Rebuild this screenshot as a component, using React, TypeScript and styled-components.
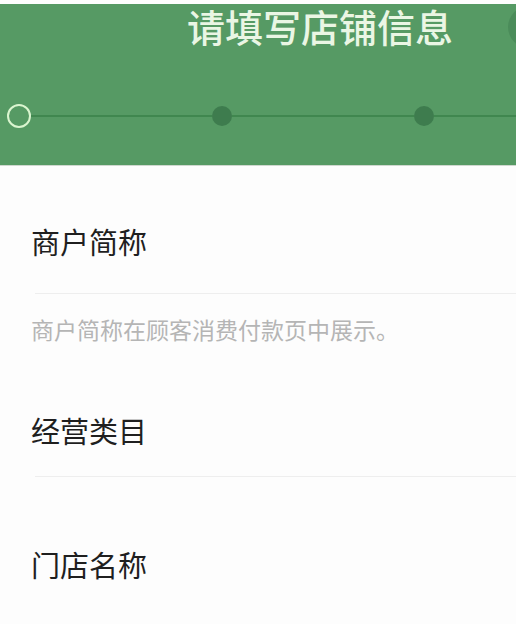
import React from "react";
import styled, { createGlobalStyle } from "styled-components";

const GlobalStyle = createGlobalStyle`
  html, body {
    margin: 0;
    padding: 0;
    background: #fdfdfd;
    font-family: "Noto Sans CJK SC", "Noto Sans", sans-serif;
  }
`;

const Page = styled.div`
  width: 516px;
  height: 624px;
  overflow: hidden;
  padding-top: 4px;
  box-sizing: border-box;
`;

const Header = styled.div`
  position: relative;
  height: 162px;
  background: #569a64;
  border-bottom: 1px solid #cfd8cf;
  box-sizing: border-box;
`;

const TitleRow = styled.div`
  display: flex;
  padding-left: 187px;
  padding-top: 1px;
  height: 41px;
`;

const Title = styled.h1`
  margin: 0;
  font-size: 38px;
  font-weight: 500;
  line-height: 41px;
  color: #eaf6e4;
  white-space: nowrap;
`;

const CloseCircle = styled.div`
  position: absolute;
  right: -34px;
  top: 2px;
  width: 42px;
  height: 42px;
  border-radius: 50%;
  background: #4b8c5a;
`;

const Steps = styled.div`
  display: flex;
  align-items: center;
  margin-top: 58px;
  padding-left: 7px;
`;

const CurrentStep = styled.div`
  width: 24px;
  height: 24px;
  border-radius: 50%;
  border: 2px solid #daf5cf;
  box-sizing: border-box;
  flex-shrink: 0;
`;

const Segment = styled.div<{ $w?: number }>`
  height: 2px;
  background: #40874f;
  ${(p) => (p.$w ? `width: ${p.$w}px; flex-shrink: 0;` : "flex: 1;")}
`;

const Dot = styled.div`
  width: 20px;
  height: 20px;
  border-radius: 50%;
  background: #3e7c4e;
  flex-shrink: 0;
`;

const Form = styled.div`
  padding-top: 55px;
`;

const Label = styled.div<{ $top: number; $bottom: number }>`
  padding-left: 31px;
  font-size: 29px;
  line-height: 40px;
  color: #1f1f1f;
  margin-top: ${(p) => p.$top}px;
  margin-bottom: ${(p) => p.$bottom}px;
`;

const Divider = styled.div`
  height: 1px;
  margin-left: 35px;
  background: #eeeeee;
`;

const Hint = styled.div`
  padding-left: 31px;
  margin-top: 20px;
  font-size: 23px;
  line-height: 30px;
  color: #b5b5b5;
`;

export default function App() {
  return (
    <Page>
      <GlobalStyle />
      <Header>
        <TitleRow>
          <Title>请填写店铺信息</Title>
        </TitleRow>
        <CloseCircle />
        <Steps>
          <CurrentStep />
          <Segment $w={181} />
          <Dot />
          <Segment $w={182} />
          <Dot />
          <Segment />
        </Steps>
      </Header>
      <Form>
        <Label $top={0} $bottom={32}>商户简称</Label>
        <Divider />
        <Hint>商户简称在顾客消费付款页中展示。</Hint>
        <Label $top={66} $bottom={26}>经营类目</Label>
        <Divider />
        <Label $top={67} $bottom={0}>门店名称</Label>
      </Form>
    </Page>
  );
}
